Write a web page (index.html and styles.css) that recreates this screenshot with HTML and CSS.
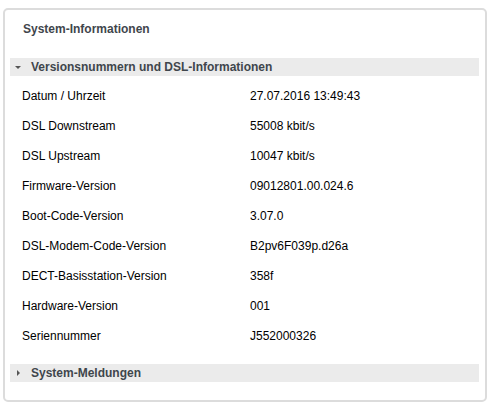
FILE: index.html
```html
<!DOCTYPE html>
<html lang="de">
<head>
<meta charset="utf-8">
<title>System-Informationen</title>
<link rel="stylesheet" href="styles.css">
</head>
<body>
<div class="panel">
  <div class="title">System-Informationen</div>
  <div class="section-head">
    <span class="tri-down"></span>
    <span class="head-text">Versionsnummern und DSL-Informationen</span>
  </div>
  <div class="rows">
    <div class="row"><span class="label">Datum / Uhrzeit</span><span class="value">27.07.2016 13:49:43</span></div>
    <div class="row"><span class="label">DSL Downstream</span><span class="value">55008 kbit/s</span></div>
    <div class="row"><span class="label">DSL Upstream</span><span class="value">10047 kbit/s</span></div>
    <div class="row"><span class="label">Firmware-Version</span><span class="value">09012801.00.024.6</span></div>
    <div class="row"><span class="label">Boot-Code-Version</span><span class="value">3.07.0</span></div>
    <div class="row"><span class="label">DSL-Modem-Code-Version</span><span class="value">B2pv6F039p.d26a</span></div>
    <div class="row"><span class="label">DECT-Basisstation-Version</span><span class="value">358f</span></div>
    <div class="row"><span class="label">Hardware-Version</span><span class="value">001</span></div>
    <div class="row"><span class="label">Seriennummer</span><span class="value">J552000326</span></div>
  </div>
  <div class="section-head closed">
    <span class="tri-right"></span>
    <span class="head-text">System-Meldungen</span>
  </div>
</div>
</body>
</html>
```

FILE: styles.css
```css
html, body {
  margin: 0;
  padding: 0;
  background: #ffffff;
}

body {
  font-family: "Liberation Sans", Arial, sans-serif;
  font-size: 12px;
  color: #000;
}

.panel {
  margin: 8px 0 0 3px;
  width: 484px;
  height: 394px;
  box-sizing: border-box;
  border: 2px solid #dcdcdc;
  border-radius: 5px;
  padding: 0 6px 0 5px;
}

.title {
  height: 48px;
  box-sizing: border-box;
  padding: 12px 0 0 13px;
  line-height: 14px;
  font-weight: bold;
  color: #3f464c;
}

.section-head {
  height: 18px;
  background: #ebebeb;
  display: flex;
  align-items: center;
  font-weight: bold;
  color: #3f464c;
  line-height: 18px;
}

.tri-down {
  width: 0;
  height: 0;
  margin: 1px 0 0 5px;
  border-left: 3px solid transparent;
  border-right: 3px solid transparent;
  border-top: 3px solid #555;
}

.tri-right {
  width: 0;
  height: 0;
  margin: 0 0 0 7px;
  border-top: 3px solid transparent;
  border-bottom: 3px solid transparent;
  border-left: 3px solid #555;
}

.section-head .head-text {
  margin-left: 10px;
}

.section-head.closed .head-text {
  margin-left: 11px;
}

.rows {
  padding-top: 5px;
  margin-bottom: 13px;
}

.row {
  display: flex;
  height: 30px;
  align-items: center;
}

.label {
  width: 228px;
  padding-left: 12px;
  flex: none;
}

.value {
  flex: 1;
}
```
